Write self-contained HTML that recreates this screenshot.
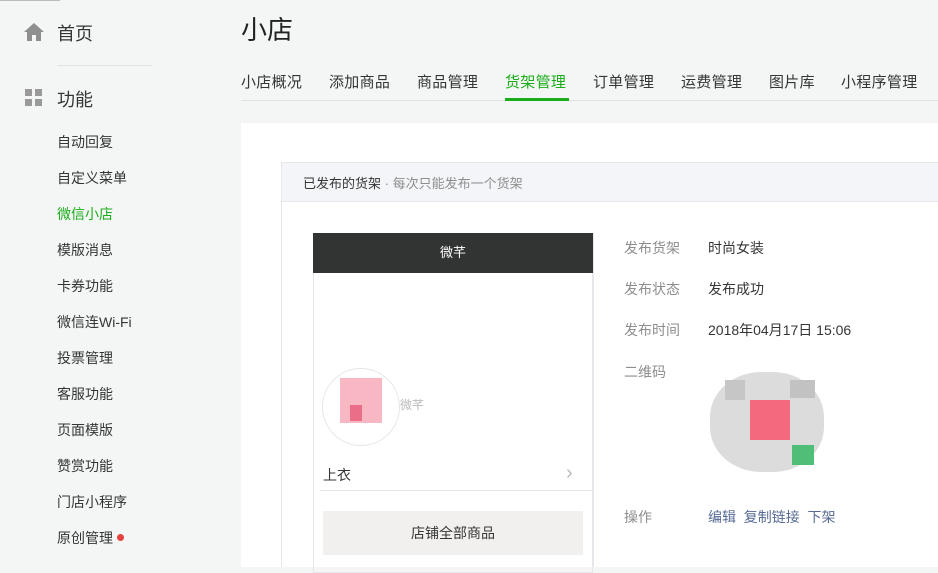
<!DOCTYPE html><html><head><meta charset="utf-8"><style>
body{margin:0;width:938px;height:567px;overflow:hidden;background:#f4f6f6;font-family:"Liberation Sans","Noto Sans CJK SC",sans-serif;position:relative;color:#353535}
.a{position:absolute}
.side div{position:absolute;left:57px;font-size:14px;color:#353535}
.tabs span{position:absolute;top:71px;font-size:15px;color:#353535;letter-spacing:0.3px}
.lbl{position:absolute;left:624px;font-size:14px;color:#8d8d8d}
.val{position:absolute;left:708px;font-size:14px;color:#353535}
.q{position:absolute}
</style></head><body>
<div class="a" style="left:0;top:0;width:60px;height:1px;background:#bbb"></div>
<svg class="a" style="left:24px;top:23px" width="20" height="18" viewBox="0 0 20 18"><path d="M10 0L0 9h3v9h5v-6h4v6h5V9h3z" fill="#8f8f8f"/></svg>
<div class="a" style="left:57px;top:20px;font-size:18px">首页</div>
<div class="a" style="left:57px;top:65px;width:95px;height:1px;background:#e2e4e4"></div>
<svg class="a" style="left:25px;top:89px" width="18" height="18"><rect width="7" height="7" fill="#999"/><rect x="10" width="7" height="7" fill="#999"/><rect y="10" width="7" height="7" fill="#999"/><rect x="10" y="10" width="7" height="7" fill="#999"/></svg>
<div class="a" style="left:57px;top:86px;font-size:18px">功能</div>
<div class="side">
<div style="top:132px">自动回复</div><div style="top:168px">自定义菜单</div><div style="top:204px;color:#1aad19">微信小店</div><div style="top:240px">模版消息</div><div style="top:276px">卡券功能</div><div style="top:312px">微信连Wi-Fi</div><div style="top:348px">投票管理</div><div style="top:384px">客服功能</div><div style="top:420px">页面模版</div><div style="top:456px">赞赏功能</div><div style="top:492px">门店小程序</div><div style="top:528px">原创管理</div>
</div>
<div class="a" style="left:117px;top:534px;width:7px;height:7px;border-radius:50%;background:#e64340"></div>
<div class="a" style="left:241px;top:10px;font-size:26px;color:#222">小店</div>
<div class="tabs">
<span style="left:241px">小店概况</span><span style="left:329px">添加商品</span><span style="left:417px">商品管理</span><span style="left:505px;color:#1aad19">货架管理</span><span style="left:593px">订单管理</span><span style="left:681px">运费管理</span><span style="left:769px">图片库</span><span style="left:841px">小程序管理</span>
</div>
<div class="a" style="left:241px;top:100px;width:697px;height:1px;background:#e0e2e2"></div>
<div class="a" style="left:505px;top:98px;width:64px;height:3px;background:#1aad19"></div>
<div class="a" style="left:241px;top:123px;width:697px;height:444px;background:#fff"></div>
<div class="a" style="left:281px;top:162px;width:657px;height:40px;background:#f4f5f9;border:1px solid #e7e7eb;border-right:none;box-sizing:border-box"></div>
<div class="a" style="left:281px;top:202px;width:1px;height:365px;background:#e7e7eb"></div>
<div class="a" style="left:303px;top:173px;font-size:13px;color:#353535">已发布的货架<span style="color:#8d8d8d"> · 每次只能发布一个货架</span></div>
<div class="a" style="left:313px;top:233px;width:280px;height:340px;border:1px solid #e7e7eb;box-sizing:border-box"></div>
<div class="a" style="left:313px;top:233px;width:280px;height:40px;background:#323433;color:#fff;font-size:13px;text-align:center;line-height:40px">微芊</div>
<div class="a" style="left:322px;top:368px;width:76px;height:76px;border-radius:50%;border:1px solid #e6e6e6;background:#fff"></div>
<div class="a" style="left:340px;top:378px;width:42px;height:45px;background:#f7b7c3"></div>
<div class="a" style="left:350px;top:405px;width:12px;height:16px;background:#ea6e88"></div>
<div class="a" style="left:400px;top:396px;font-size:12px;color:#bbb">微芊</div>
<div class="a" style="left:323px;top:465px;font-size:14px">上衣</div>
<div class="a" style="left:566px;top:462px;font-size:20px;color:#bbb">›</div>
<div class="a" style="left:320px;top:490px;width:273px;height:1px;background:#e7e7eb"></div>
<div class="a" style="left:323px;top:511px;width:260px;height:44px;background:#f2f0ee;font-size:14px;text-align:center;line-height:44px">店铺全部商品</div>
<div class="a" style="left:593px;top:233px;width:1px;height:334px;background:#e7e7eb"></div>
<div class="lbl" style="top:238px">发布货架</div><div class="val" style="top:238px">时尚女装</div>
<div class="lbl" style="top:279px">发布状态</div><div class="val" style="top:279px">发布成功</div>
<div class="lbl" style="top:320px">发布时间</div><div class="val" style="top:320px">2018年04月17日 15:06</div>
<div class="lbl" style="top:362px">二维码</div>
<div class="a" style="left:710px;top:372px;width:114px;height:100px;background:#dcdcdc;border-radius:45%"></div>
<div class="a" style="left:725px;top:380px;width:20px;height:20px;background:#c6c6c6"></div>
<div class="a" style="left:790px;top:380px;width:25px;height:18px;background:#c2c2c2"></div>
<div class="a" style="left:750px;top:400px;width:40px;height:40px;background:#f5697f"></div>
<div class="a" style="left:792px;top:445px;width:22px;height:20px;background:#4fbf78"></div>
<div class="lbl" style="top:507px">操作</div>
<div class="val" style="top:507px;color:#576b95">编辑&nbsp; 复制链接&nbsp; 下架</div>
</body></html>
